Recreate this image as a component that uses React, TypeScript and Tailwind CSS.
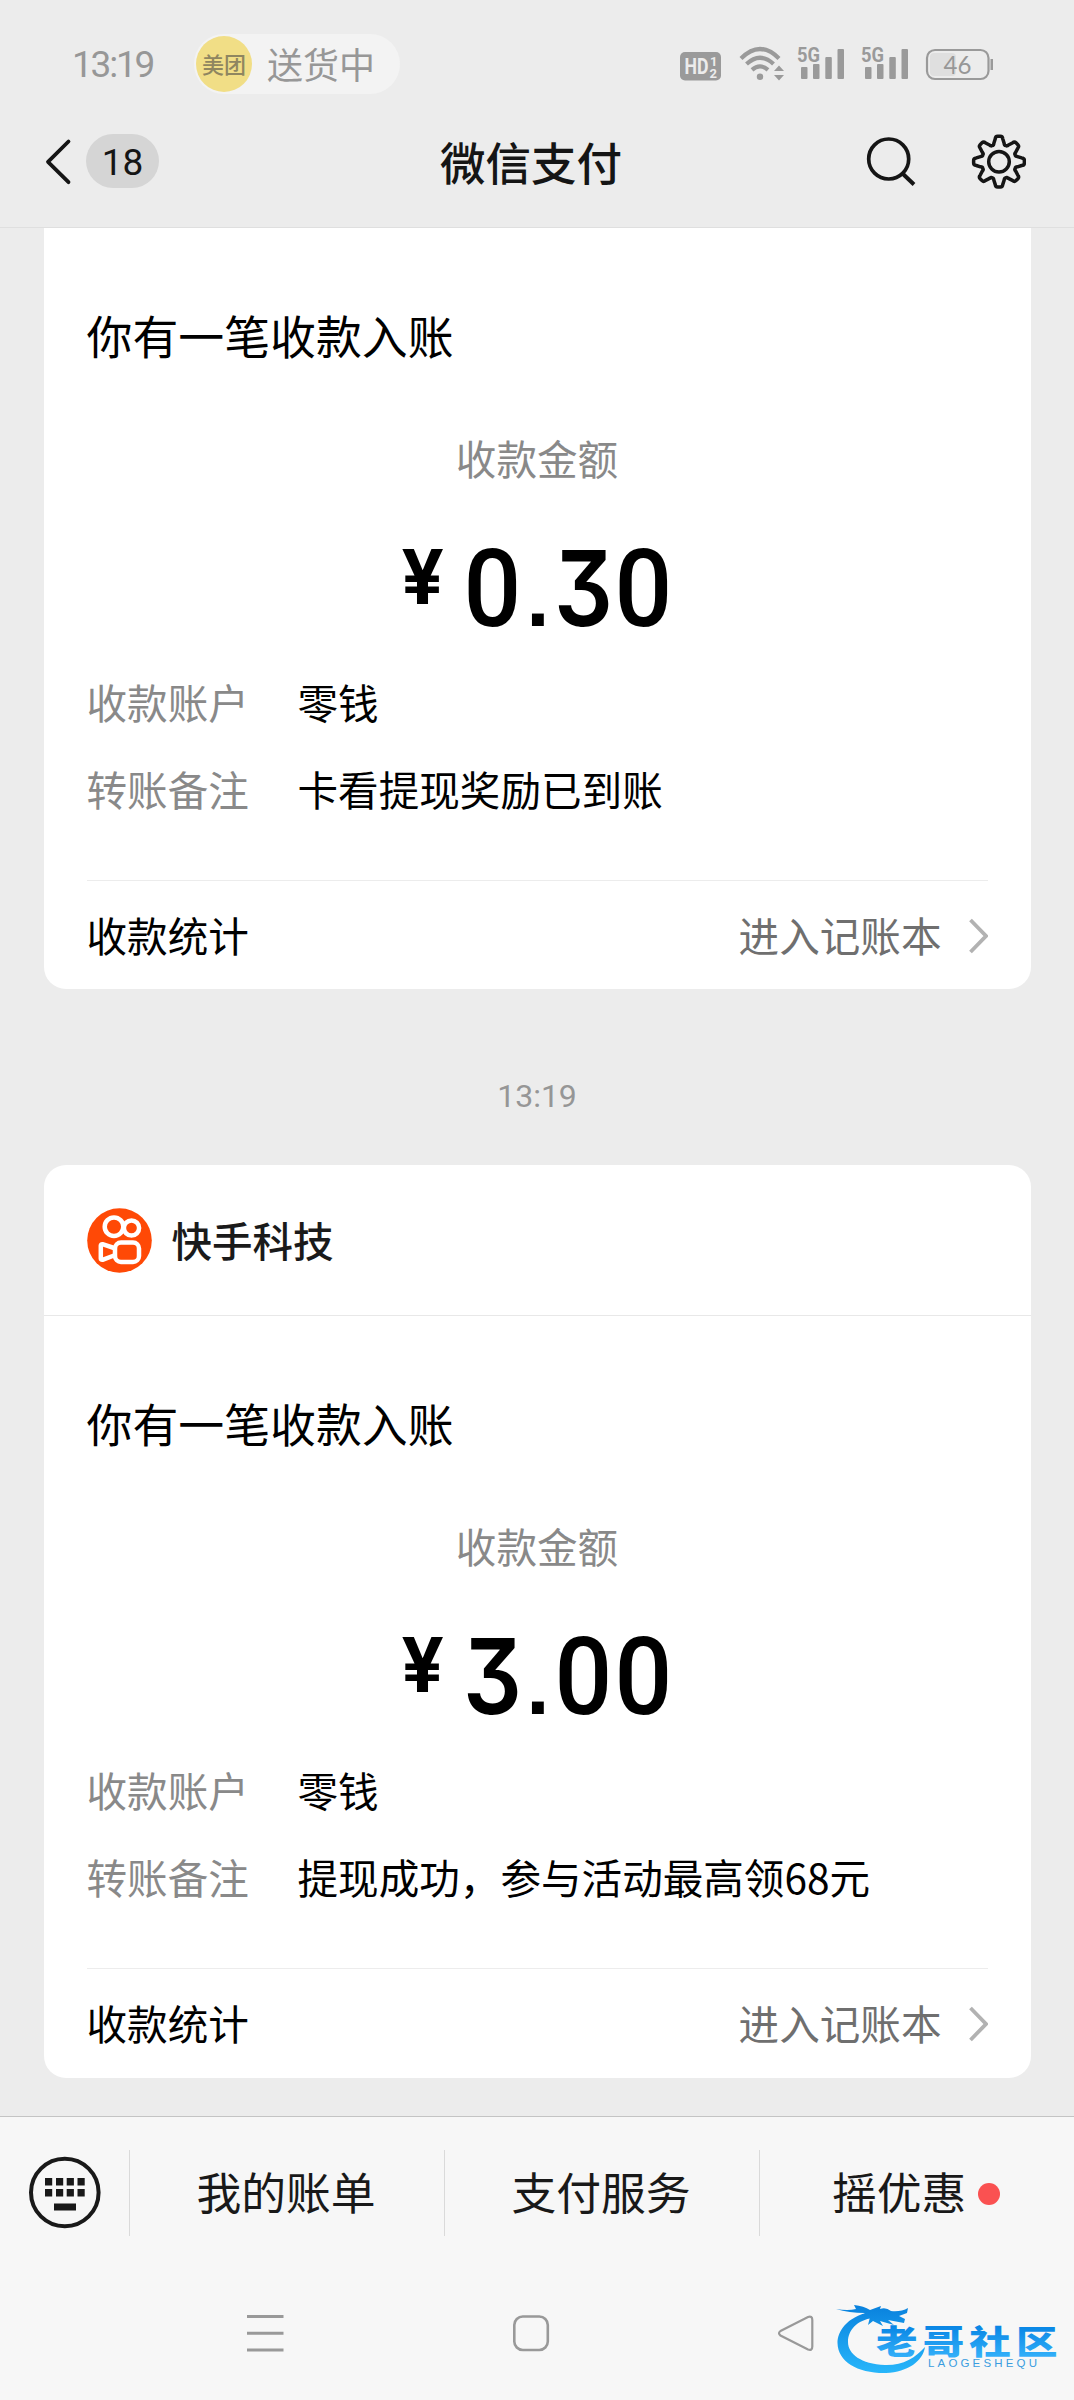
import React from "react";

const cjk = "font-['Noto_Sans_CJK_SC',sans-serif]";

function gearPath(cx: number, cy: number) {
  const at = (deg: number, r: number) => {
    const a = ((deg - 90) * Math.PI) / 180;
    return `${(cx + r * Math.cos(a)).toFixed(2)} ${(cy + r * Math.sin(a)).toFixed(2)}`;
  };
  let d = "";
  for (let i = 0; i < 8; i++) {
    const t = i * 45;
    d += `${i ? "L" : "M"}${at(t - 15.5, 19.2)} L${at(t - 9.5, 23)} Q${at(t - 8, 25.6)} ${at(t - 3, 25.4)} L${at(t + 3, 25.4)} Q${at(t + 8, 25.6)} ${at(t + 9.5, 23)} L${at(t + 15.5, 19.2)} Q${at(t + 18, 17)} ${at(t + 22.5, 17.6)} Q${at(t + 27, 17)} ${at(t + 29.5, 19.2)} `;
  }
  return d + "Z";
}

function Signal() {
  return (
    <svg width="50" height="47" viewBox="0 -11 50 47" fill="#9a9a9a">
      <text x="0" y="17" fontFamily="Roboto" fontWeight="700" fontSize="20.5" textLength="23" lengthAdjust="spacingAndGlyphs">5G</text>
      <rect x="4" y="22" width="6.5" height="12" rx="1" />
      <rect x="16" y="19" width="6.5" height="15" rx="1" />
      <rect x="28.3" y="12" width="6.5" height="22" rx="1" />
      <rect x="40.5" y="4" width="6.5" height="30" rx="1" />
    </svg>
  );
}

function StatusBar() {
  return (
    <div className="flex h-[94px] items-start pt-[34px]">
      <div className="ml-[72px] w-[122px] font-['Roboto',sans-serif] text-[37px] leading-[61px] tracking-[-2.2px] text-[#979797]">13:19</div>
      <div className={`flex h-[60px] w-[206px] items-center rounded-full bg-[#f3f3f3] pl-[2px] ${cjk}`}>
        <div className="flex h-[56px] w-[56px] items-center justify-center rounded-full bg-[#f1de86] text-[22px] leading-none font-medium text-[#8f8660]">
          <span className="-translate-y-px">美团</span>
        </div>
        <span className="ml-[15px] -translate-y-px text-[36px] leading-none text-[#979797]">送货中</span>
      </div>
      <div className="ml-[280px] flex h-[60px]">
        <svg width="41" height="60" viewBox="0 0 41 60">
          <rect y="18" width="41" height="28.5" rx="5" fill="#9a9a9a" />
          <g fill="#ececec" fontFamily="Roboto" fontWeight="700">
            <text x="4.5" y="39.5" fontSize="22" textLength="24" lengthAdjust="spacingAndGlyphs">HD</text>
            <text x="30" y="31.5" fontSize="13">1</text>
            <text x="29.5" y="43.5" fontSize="13">2</text>
          </g>
        </svg>
        <svg className="ml-[17px]" width="50" height="60" viewBox="0 0 50 60" fill="none" stroke="#9a9a9a" strokeWidth="4.2">
          <path d="M3 24.5 Q22 5.5 41 24.5" />
          <path d="M8.5 30 Q22 17.5 35.5 30" />
          <path d="M14 35.8 Q22 29 30 35.8" />
          <circle cx="22" cy="42.7" r="3.2" fill="#9a9a9a" stroke="none" />
          <path d="M36 37 L41 31.5 L46 37Z M36 41 L41 46.5 L46 41Z" fill="#9a9a9a" stroke="none" />
        </svg>
        <div className="ml-[9px] flex gap-[14px]">
          <Signal />
          <Signal />
        </div>
        <svg className="ml-[14px]" width="70" height="60" viewBox="0 0 70 60">
          <rect x="2" y="16" width="61.5" height="29" rx="8" fill="none" stroke="#9a9a9a" strokeWidth="2.2" />
          <rect x="5" y="19" width="26" height="23" rx="4" fill="#dfdfdf" />
          <rect x="65.5" y="25" width="2.5" height="11" fill="#9a9a9a" />
          <text x="18.5" y="39.8" fontFamily="Lato" fontSize="25" fill="#979797" textLength="28" lengthAdjust="spacingAndGlyphs">46</text>
        </svg>
      </div>
    </div>
  );
}

function NavBar() {
  return (
    <div className="flex h-[134px] items-start border-b border-[#dfdfdf]">
      <svg className="ml-[40px]" width="46" height="134" viewBox="0 0 46 134" fill="none" stroke="#151515" strokeWidth="3.8" strokeLinecap="round" strokeLinejoin="round">
        <path d="M28.5 47.5 L8 67.8 L28.5 88.2" />
      </svg>
      <div className="mt-[40px] flex h-[54px] w-[73px] items-center justify-center rounded-full bg-[#d5d5d5] font-['Roboto',sans-serif] text-[37px] leading-none text-[#151515]">
        <span className="pt-[2px] font-normal">18</span>
      </div>
      <div className={`ml-[281px] w-[426px] text-[45.5px] leading-[134px] font-medium text-[#151515] ${cjk}`}>微信支付</div>
      <svg width="160" height="134" viewBox="866 94 160 134" fill="none" stroke="#151515">
        <circle cx="888.7" cy="159" r="20" strokeWidth="3.7" />
        <path d="M902.5 173.5 L914 184.5" strokeWidth="4" />
        <path d={gearPath(999, 161.7)} strokeWidth="3.5" strokeLinejoin="round" />
        <circle cx="999" cy="161.7" r="10.3" strokeWidth="3.5" />
      </svg>
    </div>
  );
}

function Digit({ ch }: { ch: string }) {
  if (ch === ".") return <span className="w-[30px] text-center font-['Liberation_Sans',sans-serif] text-[84px] font-bold">.</span>;
  if (ch === "3")
    return (
      <span className="flex w-[60.2px] justify-center font-['Inter',sans-serif] text-[105px] font-semibold">
        <span className="scale-x-[0.88] [font-feature-settings:'cv09']">3</span>
      </span>
    );
  return (
    <span className="flex w-[60.2px] justify-center font-['Roboto',sans-serif] text-[107px] font-medium">
      <span className="scale-x-[0.95]">{ch}</span>
    </span>
  );
}

function Row({ label, value }: { label: string; value: string }) {
  return (
    <div className="flex h-[87px] items-center">
      <span className="w-[211px] text-[#898989]">{label}</span>
      <span>{value}</span>
    </div>
  );
}

function Receipt({ amount, note }: { amount: string; note: string }) {
  return (
    <div className={`flex flex-col px-[43px] pt-[77px] text-[40.6px] leading-none text-black ${cjk}`}>
      <div className="flex h-[60px] items-center text-[45.9px]">你有一笔收款入账</div>
      <div className="mt-[63px] flex h-[60px] items-center justify-center text-[#898989]">收款金额</div>
      <div className="mt-[40px] flex h-[120px] items-baseline justify-center leading-[120px]">
        <span className="mr-[18px] inline-block w-[44px] -translate-y-[22px] text-center font-['Inter',sans-serif] text-[75px] font-bold">¥</span>
        {amount.split("").map((ch, i) => (
          <Digit key={i} ch={ch} />
        ))}
      </div>
      <div className="mt-[11px]">
        <Row label="收款账户" value="零钱" />
        <Row label="转账备注" value={note} />
      </div>
      <div className="mt-[47px] flex h-[110px] items-center border-t border-[#ececec]">
        <span>收款统计</span>
        <span className="ml-auto text-[#6f6f6f]">进入记账本</span>
        <svg className="ml-[24px]" width="22" height="40" viewBox="0 0 22 40" fill="none" stroke="#b2b2b2" strokeWidth="3.8">
          <path d="M4.5 4 L20 20 L4.5 36" />
        </svg>
      </div>
    </div>
  );
}

function MerchantLogo() {
  return (
    <svg width="65" height="65" viewBox="0 0 65 65" fill="none" stroke="#fff" strokeWidth="4.5" strokeLinejoin="round">
      <circle cx="32.5" cy="32.5" r="32.3" fill="#ff4906" stroke="none" />
      <circle cx="27" cy="18.7" r="9.3" />
      <circle cx="44.5" cy="20" r="7.6" />
      <rect x="28" y="34.5" width="24" height="19.5" rx="6" />
      <path d="M27 40 L15.500 36.2 Q13.8 36 13.8 37.5 V50.5 Q13.8 52 15.5 51.8 L27 47.5" />
    </svg>
  );
}

function Watermark() {
  return (
    <div className="absolute right-[10px] bottom-[20px] h-[84px] w-[232px]">
      <svg width="232" height="84" viewBox="832 2296 232 84">
        <defs>
          <linearGradient id="wave" x1="0" y1="2302" x2="0" y2="2374" gradientUnits="userSpaceOnUse">
            <stop offset="0" stopColor="#087fdc" />
            <stop offset="1" stopColor="#28b7fb" />
          </linearGradient>
          <linearGradient id="word" x1="0" y1="0" x2="0" y2="1">
            <stop offset="0.2" stopColor="#0784e4" />
            <stop offset="0.9" stopColor="#35b2fa" />
          </linearGradient>
        </defs>
        <g fill="url(#wave)">
          <path d="M870 2312 C846 2317 837.500 2332 837.500 2343 C838 2362 858 2373.500 886 2373 C908 2372 923 2361 925 2347 C915 2358 903 2365.500 885 2365 C861 2364 848 2354 848 2342 C848 2330 857 2320 873 2318 Z" />
          <path d="M836 2309 Q848 2311 856 2309 L854 2305 Q864 2306 870 2310 L881 2306 L880 2309 Q886 2307 891 2311 Q901 2312 908 2308 L907 2313 L899 2316 L905 2319 L904 2323 L888 2320 L894 2325 L880 2321 L883 2326 L873 2321 L868 2325 L870 2317 L861 2318 L865 2313 Q849 2313 836 2309Z" />
        </g>
        <text transform="translate(876 2354) scale(1 0.8)" fill="url(#word)" fontFamily="Noto Sans CJK SC" fontWeight="900" fontSize="41.5" letterSpacing="5.2">老哥社区</text>
        <text x="928" y="2367" fill="#3b9ddf" fontFamily="Liberation Sans" fontSize="11.5" textLength="109">LAOGESHEQU</text>
      </svg>
    </div>
  );
}

function MenuBar() {
  return (
    <div className={`flex h-[152px] items-center text-[44.8px] leading-none text-[#191919] ${cjk}`}>
      <svg width="129" height="152" viewBox="0 2116 129 152" fill="#191919">
        <circle cx="64.8" cy="2191.5" r="33.8" fill="none" stroke="#191919" strokeWidth="4" />
        {[45, 56, 66.7, 77.5].map((x) => (
          <React.Fragment key={x}>
            <rect x={x} y="2177" width="7.2" height="7.5" />
            <rect x={x} y="2188" width="7.2" height="7.5" />
          </React.Fragment>
        ))}
        <rect x="54" y="2202.5" width="22" height="7" />
      </svg>
      <div className="flex h-[86px] w-[315px] items-center justify-center border-l border-[#dadada] pr-[2px] pb-[3px]">我的账单</div>
      <div className="flex h-[86px] w-[315px] items-center justify-center border-l border-[#dadada] pr-[2px] pb-[3px]">支付服务</div>
      <div className="flex h-[86px] w-[315px] items-center border-l border-[#dadada] pb-[3px] pl-[72px]">
        摇优惠
        <span className="mt-[5px] ml-[12px] h-[22px] w-[22px] rounded-full bg-[#fa5151]" />
      </div>
    </div>
  );
}

export default function App() {
  return (
    <div className="relative flex h-[2400px] w-[1074px] flex-col overflow-hidden bg-[#ececec]">
      <StatusBar />
      <NavBar />
      <div className="mx-[43.5px] h-[761px] rounded-b-[22px] bg-white">
        <Receipt amount="0.30" note="卡看提现奖励已到账" />
      </div>
      <div className="flex h-[176px] items-center justify-center pt-[38px] font-['Roboto',sans-serif] text-[32px] leading-none text-[#969696]">13:19</div>
      <div className="mx-[43.5px] h-[913px] rounded-[22px] bg-white">
        <div className={`flex h-[151px] items-center border-b border-[#e8e8e8] pl-[43px] text-[40.5px] leading-none font-medium text-[#1a1a1a] ${cjk}`}>
          <MerchantLogo />
          <span className="ml-[20px]">快手科技</span>
        </div>
        <Receipt amount="3.00" note="提现成功，参与活动最高领68元" />
      </div>
      <div className="mt-auto h-[284px] border-t border-[#c4c4c4] bg-[#f7f7f7]">
        <MenuBar />
        <svg width="820" height="131" viewBox="0 2269 820 131" fill="none" stroke="#999" strokeWidth="2.6">
          <path d="M247 2316.6 H283.5 M247 2333.3 H283.5 M247 2350 H283.5" strokeWidth="3" />
          <rect x="514.3" y="2316.5" width="33.5" height="33.5" rx="8.5" />
          <path d="M780.5 2331 L808 2317 Q812.3 2315.5 812.3 2320 V2346.5 Q812.3 2351 808 2349.5 L780.5 2335.5 Q777.5 2333.3 780.5 2331Z" strokeWidth="2.2" />
        </svg>
      </div>
      <Watermark />
    </div>
  );
}
